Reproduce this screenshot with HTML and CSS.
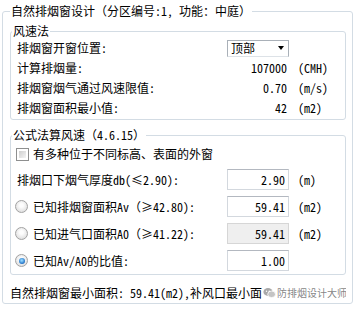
FILE: index.html
```html
<!DOCTYPE html>
<html lang="zh">
<head>
    <meta charset="UTF-8">
    <meta name="viewport" content="width=device-width, initial-scale=1.0">
    <title>自然排烟窗设计</title>
    <link rel="stylesheet" href="styles.css">
</head>
<body>

    <fieldset class="dlg">
        <legend>自然排烟窗设计（分区编号:1, 功能：中庭）</legend>

        <fieldset class="grp grp-speed">
            <legend>风速法</legend>
            <div class="row">
                <span class="lbl">排烟窗开窗位置:</span>
                <div class="combo"><span>顶部</span><span class="arrow"></span></div>
            </div>
            <div class="row">
                <span class="lbl">计算排烟量:</span>
                <span class="val">107000</span>
                <span class="unit">(CMH)</span>
            </div>
            <div class="row">
                <span class="lbl">排烟窗烟气通过风速限值:</span>
                <span class="val">0.70</span>
                <span class="unit">(m/s)</span>
            </div>
            <div class="row">
                <span class="lbl">排烟窗面积最小值:</span>
                <span class="val">42</span>
                <span class="unit">(m2)</span>
            </div>
        </fieldset>

        <fieldset class="grp grp-formula">
            <legend>公式法算风速（4.6.15）</legend>
            <div class="check-row">
                <span class="chk"></span>
                <span>有多种位于不同标高、表面的外窗</span>
            </div>
            <div class="row tall">
                <span class="lbl">排烟口下烟气厚度db(≤2.90):</span>
                <span class="field">2.90</span>
                <span class="unit">(m)</span>
            </div>
            <div class="row tall">
                <span class="lbl"><span class="radio"></span>已知排烟窗面积Av（≥42.80):</span>
                <span class="field">59.41</span>
                <span class="unit">(m2)</span>
            </div>
            <div class="row tall">
                <span class="lbl"><span class="radio"></span>已知进气口面积A0（≥41.22):</span>
                <span class="field off">59.41</span>
                <span class="unit">(m2)</span>
            </div>
            <div class="row tall">
                <span class="lbl"><span class="radio on"></span>已知Av/A0的比值:</span>
                <span class="field">1.00</span>
            </div>
        </fieldset>

        <div class="summary">
            <span>自然排烟窗最小面积: 59.41(m2),补风口最小面</span>
            <span class="watermark">
                <svg width="13" height="12" viewBox="0 0 13 12">
                    <ellipse cx="5" cy="5" rx="4.6" ry="3.9" fill="#a9a9a9"/>
                    <ellipse cx="8.6" cy="7.3" rx="3.9" ry="3.3" fill="#c4c4c4" stroke="#fff" stroke-width="0.8"/>
                    <circle cx="3.5" cy="4.2" r="0.7" fill="#fff"/>
                    <circle cx="6.3" cy="4.2" r="0.7" fill="#fff"/>
                </svg>
                <span>防排烟设计大师</span>
            </span>
        </div>
    </fieldset>

</body>
</html>
```

FILE: styles.css
```css
/* Podstawa */
body {
    margin: 0;
    width: 357px;
    height: 309px;
    overflow: hidden;
    background: #fff;
    color: #000;
    font-family: "Noto Sans Mono CJK SC", "Noto Sans CJK SC", sans-serif;
    font-size: 12px;
    line-height: 14px;
}

/* Ramka okna */
.dlg {
    box-sizing: border-box;
    height: 300px;
    margin: 4px 4px 0 2px;
    padding: 0 6px 0 7px;
    border: 1px solid #d3dce4;
    border-radius: 3px;
    min-width: 0;
}
.dlg > legend {
    padding: 0 1px;
    line-height: 14px;
}

/* Grupy */
.grp {
    margin: 6px 0 0;
    padding: 0 5px 1px 6px;
    border: 1px solid #d3dce4;
    border-radius: 3px;
    min-width: 0;
}
.grp > legend {
    margin-left: -5px;
    padding: 0 1px;
    line-height: 14px;
}
.grp-formula {
    margin-top: 8px;
    padding-bottom: 0;
}

/* Wiersze */
.row {
    display: grid;
    grid-template-columns: 210px 62px auto;
    align-items: center;
    height: 20px;
}
.row.tall {
    height: 27px;
}
.lbl {
    display: flex;
    align-items: center;
    white-space: nowrap;
}
.val {
    text-align: right;
    padding-right: 2px;
}
.unit {
    padding-left: 9px;
}

/* Lista rozwijana */
.combo {
    box-sizing: border-box;
    height: 17px;
    display: flex;
    align-items: center;
    justify-content: space-between;
    padding: 0 4px 0 3px;
    border: 1px solid #a9b0b8;
    border-bottom-color: #dde2e7;
    background: #fff;
}
.arrow {
    width: 0;
    height: 0;
    border-left: 3.5px solid transparent;
    border-right: 3.5px solid transparent;
    border-top: 4px solid #000;
}

/* Pola tekstowe */
.field {
    box-sizing: border-box;
    height: 21px;
    line-height: 19px;
    padding-right: 3px;
    text-align: right;
    border: 1px solid #d3d8de;
    border-top-color: #b3b8c0;
    background: #fff;
}
.field.off {
    background: #efefef;
    border-color: #d6d6d6;
}

/* Pole wyboru */
.check-row {
    display: flex;
    align-items: center;
    gap: 4px;
    height: 24px;
    margin-left: -1px;
}
.chk {
    box-sizing: border-box;
    width: 13px;
    height: 13px;
    border: 1px solid #8e8f8f;
    padding: 2px;
    background: #fff content-box linear-gradient(135deg, #cfcfcf, #f4f4f4);
}

/* Przyciski radiowe */
.radio {
    position: relative;
    box-sizing: border-box;
    width: 13px;
    height: 13px;
    margin: 0 5px 0 -2px;
    border: 1px solid #a2a2a2;
    border-radius: 50%;
    background: radial-gradient(circle at 50% 40%, #fdfdfd 20%, #d9d9d9 90%);
}
.radio.on::after {
    content: "";
    position: absolute;
    left: 2.5px;
    top: 2.5px;
    width: 6px;
    height: 6px;
    border-radius: 50%;
    background: radial-gradient(circle at 45% 40%, #8fd6ff 10%, #1f6fc4 70%, #16407a);
}

/* Podsumowanie */
.summary {
    display: flex;
    align-items: center;
    margin-top: 10px;
    line-height: 16px;
    white-space: nowrap;
    overflow: hidden;
}

/* Znak wodny */
.watermark {
    display: flex;
    align-items: center;
    gap: 1px;
    margin-left: 1px;
    color: rgba(110, 110, 110, 0.85);
    font-size: 10px;
    white-space: nowrap;
}
```
